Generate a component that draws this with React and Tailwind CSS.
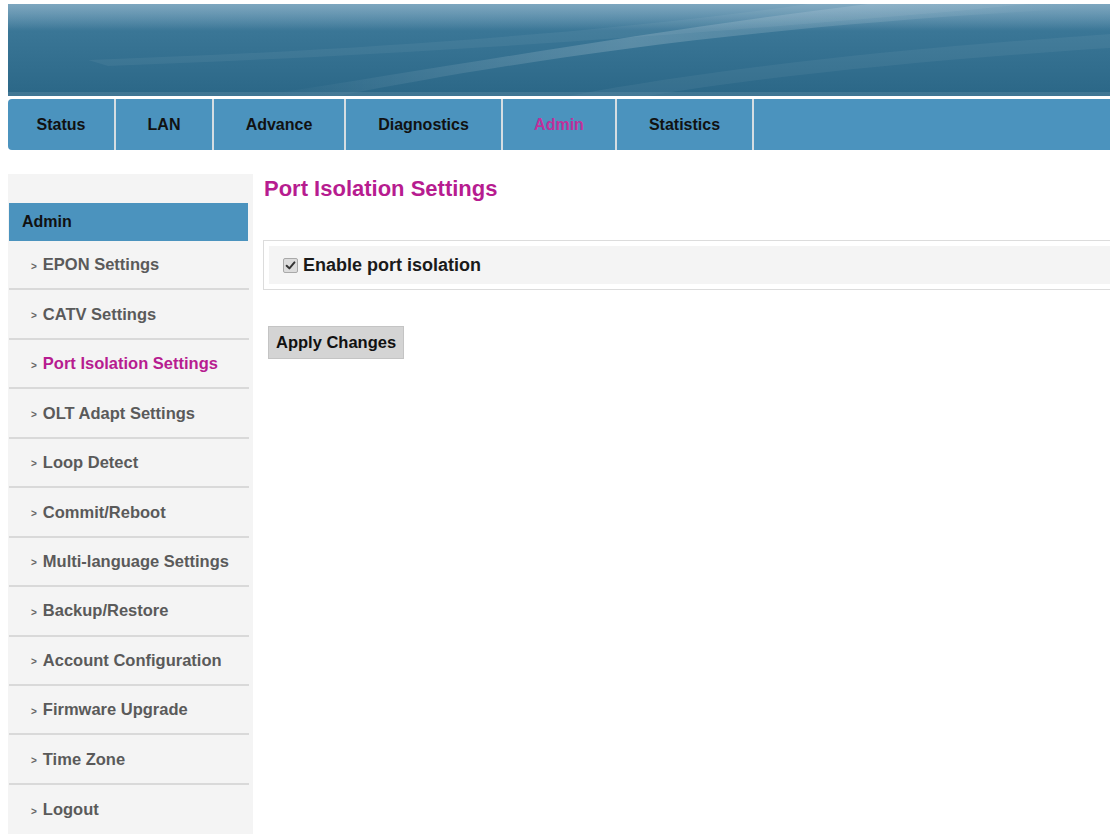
import React from "react";

const tabs = [
  { label: "Status", w: "w-[108px]" },
  { label: "LAN", w: "w-[98px]" },
  { label: "Advance", w: "w-[132px]" },
  { label: "Diagnostics", w: "w-[157px]" },
  { label: "Admin", w: "w-[114px]", active: true },
  { label: "Statistics", w: "w-[137px]" },
];

const menu = [
  "EPON Settings",
  "CATV Settings",
  "Port Isolation Settings",
  "OLT Adapt Settings",
  "Loop Detect",
  "Commit/Reboot",
  "Multi-language Settings",
  "Backup/Restore",
  "Account Configuration",
  "Firmware Upgrade",
  "Time Zone",
  "Logout",
];

function Banner() {
  return (
    <div className="h-[92px] w-full overflow-hidden bg-[#2d6b8c]">
      <svg width="100%" height="92" viewBox="0 0 1102 92" preserveAspectRatio="none">
        <defs>
          <linearGradient id="base" x1="0" y1="0" x2="0" y2="1">
            <stop offset="0" stopColor="#5b8eac" />
            <stop offset="0.3" stopColor="#3a7696" />
            <stop offset="1" stopColor="#2b6787" />
          </linearGradient>
          <linearGradient id="sweep" x1="0" y1="0" x2="1" y2="0">
            <stop offset="0" stopColor="#ffffff" stopOpacity="0" />
            <stop offset="0.45" stopColor="#ffffff" stopOpacity="0.18" />
            <stop offset="0.75" stopColor="#ffffff" stopOpacity="0.1" />
            <stop offset="1" stopColor="#ffffff" stopOpacity="0" />
          </linearGradient>
          <linearGradient id="haze" x1="0" y1="0" x2="0" y2="1">
            <stop offset="0" stopColor="#a6c4d6" stopOpacity="0.45" />
            <stop offset="1" stopColor="#a6c4d6" stopOpacity="0" />
          </linearGradient>
        </defs>
        <rect width="1102" height="92" fill="url(#base)" />
        <rect width="1102" height="26" fill="url(#haze)" />
        <path d="M330 92 C 520 55, 740 22, 1080 4 L 1080 0 L 860 0 C 660 24, 470 58, 250 92 Z" fill="url(#sweep)" />
        <path d="M100 62 C 360 52, 600 38, 960 6 L 1020 0 L 800 0 C 600 28, 360 46, 80 56 Z" fill="#ffffff" opacity="0.05" />
        <path d="M560 92 C 720 62, 900 44, 1102 30 L 1102 44 C 920 56, 760 72, 640 92 Z" fill="#ffffff" opacity="0.05" />
        <rect x="0" y="88" width="1102" height="4" fill="#5b8aa4" opacity="0.45" />
      </svg>
    </div>
  );
}

function Check() {
  return (
    <span className="flex h-[15px] w-[15px] items-center justify-center rounded-[2px] border border-[#a9a9a9] bg-[#dcdcdc]">
      <svg width="11" height="11" viewBox="0 0 10 10">
        <path d="M1.5 5.2 L4 7.6 L8.6 2.2" fill="none" stroke="#333" strokeWidth="1.8" strokeLinecap="round" strokeLinejoin="round" />
      </svg>
    </span>
  );
}

export default function App() {
  return (
    <div
      className="h-[834px] w-[1110px] overflow-hidden bg-white pl-[8px] pt-[4px]"
      style={{ fontFamily: '"Liberation Sans", Arial, sans-serif' }}
    >
      <Banner />
      <nav className="mt-[3px] flex h-[51px] overflow-hidden rounded-l-[4px] bg-[#4b93be]">
        {tabs.map((t) => (
          <div
            key={t.label}
            className={`${t.w} flex h-full items-center justify-center border-r-2 border-[#d5dde2] text-[16px] font-bold ${
              t.active ? "text-[#c0309b]" : "text-[#111]"
            }`}
          >
            {t.label}
          </div>
        ))}
        <div className="flex-1" />
      </nav>

      <div className="mt-[24px] flex">
        <aside className="w-[245px] shrink-0 bg-[#f4f4f4] pt-[29px]">
          <div className="ml-[1px] flex h-[38px] w-[239px] items-center bg-[#4b93be] pl-[13px] text-[16px] font-bold text-[#111]">
            Admin
          </div>
          {menu.map((m, i) => (
            <div
              key={m}
              className={`ml-[1px] flex h-[49.45px] w-[240px] items-center pl-[22px] text-[16.5px] font-bold ${
                i < menu.length - 1 ? "border-b-2 border-[#d9d9d9]" : ""
              } ${m === "Port Isolation Settings" ? "text-[#b71c90]" : "text-[#5a5a5a]"}`}
            >
              <span className="mr-[6px] mt-[3px] text-[10px] font-bold text-[#666]">&gt;</span>
              {m}
            </div>
          ))}
        </aside>

        <main className="ml-[10px] flex-1 overflow-hidden">
          <h1 className="ml-[1px] mt-[2px] text-[22px] font-bold leading-[26px] text-[#b71c90]">
            Port Isolation Settings
          </h1>
          <div className="mt-[38px] w-[calc(100%+20px)] border border-[#dcdcdc] p-[5px]">
            <div className="flex h-[38px] items-center gap-[5px] bg-[#f4f4f4] pl-[14px]">
              <Check />
              <span className="text-[18px] font-bold text-[#1a1a1a]">Enable port isolation</span>
            </div>
          </div>
          <button className="ml-[5px] mt-[36px] h-[33px] border border-[#c4c4c4] bg-[#d4d4d4] px-[7px] text-[16.5px] font-bold text-[#111]">
            Apply Changes
          </button>
        </main>
      </div>
    </div>
  );
}
